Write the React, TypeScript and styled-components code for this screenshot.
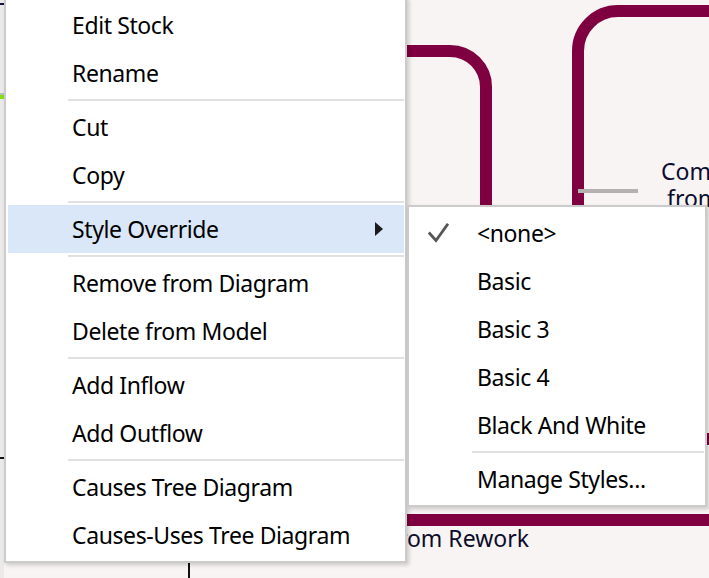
import React from "react"
import styled, { createGlobalStyle } from "styled-components"

type MenuEntry =
  | { kind: "item"; label: string; checked?: boolean; submenu?: boolean; active?: boolean }
  | { kind: "sep" }

const item = (label: string, extra: Partial<{ checked: boolean; submenu: boolean; active: boolean }> = {}): MenuEntry => ({
  kind: "item",
  label,
  ...extra,
})
const sep: MenuEntry = { kind: "sep" }

const mainEntries: MenuEntry[] = [
  item("Edit Stock"),
  item("Rename"),
  sep,
  item("Cut"),
  item("Copy"),
  sep,
  item("Style Override", { submenu: true, active: true }),
  sep,
  item("Remove from Diagram"),
  item("Delete from Model"),
  sep,
  item("Add Inflow"),
  item("Add Outflow"),
  sep,
  item("Causes Tree Diagram"),
  item("Causes-Uses Tree Diagram"),
]

const styleEntries: MenuEntry[] = [
  item("<none>", { checked: true }),
  item("Basic"),
  item("Basic 3"),
  item("Basic 4"),
  item("Black And White"),
  sep,
  item("Manage Styles..."),
]

const GlobalStyle = createGlobalStyle`
  html, body {
    margin: 0;
    padding: 0;
    overflow: hidden;
  }
  body {
    font-family: "Noto Sans", "Open Sans", sans-serif;
  }
`

const Screen = styled.div`
  position: relative;
  display: flex;
  width: 709px;
  height: 578px;
  overflow: hidden;
  background: #f8f4f4;
`

const SideStrip = styled.div`
  flex: none;
  width: 4px;
  background: linear-gradient(
    to bottom,
    #ebe9e9 0,
    #ebe9e9 3px,
    #14143a 3px,
    #14143a 5px,
    #ebe9e9 5px,
    #ebe9e9 93px,
    #bdbdbd 93px,
    #bdbdbd 95px,
    #84e014 95px,
    #84e014 99px,
    #ebe9e9 99px,
    #ebe9e9 457px,
    #111 457px,
    #111 459px,
    #ebe9e9 459px
  );
`

const Canvas = styled.div`
  position: relative;
  flex: 1;
`

const StockShape = styled.div<{ $x: number; $y: number; $w: number; $h: number; $r: number }>`
  position: absolute;
  left: ${(p) => p.$x}px;
  top: ${(p) => p.$y}px;
  width: ${(p) => p.$w}px;
  height: ${(p) => p.$h}px;
  border: 12px solid #7f0040;
  border-radius: ${(p) => p.$r}px;
  box-sizing: border-box;
`

const FlowBar = styled.div<{ $x: number; $y: number; $w: number }>`
  position: absolute;
  left: ${(p) => p.$x}px;
  top: ${(p) => p.$y}px;
  width: ${(p) => p.$w}px;
  height: 12px;
  background: #7f0040;
`

const Connector = styled.div<{ $x: number; $y: number; $w: number; $h: number; $color: string }>`
  position: absolute;
  left: ${(p) => p.$x}px;
  top: ${(p) => p.$y}px;
  width: ${(p) => p.$w}px;
  height: ${(p) => p.$h}px;
  background: ${(p) => p.$color};
`

const StockLabel = styled.div<{ $x: number; $y: number }>`
  position: absolute;
  left: ${(p) => p.$x}px;
  top: ${(p) => p.$y}px;
  font-size: 23px;
  line-height: 27px;
  color: #0c0c2c;
  white-space: nowrap;
`

const LabelLine = styled.span<{ $shift?: number }>`
  display: block;
  padding-left: ${(p) => p.$shift ?? 0}px;
`

const MenuPanel = styled.div<{ $x: number; $y: number; $w: number }>`
  position: absolute;
  left: ${(p) => p.$x}px;
  top: ${(p) => p.$y}px;
  width: ${(p) => p.$w}px;
  box-sizing: border-box;
  display: flex;
  flex-direction: column;
  padding: 2px 0;
  background: #fff;
  border: 2px solid #cbcbcb;
  box-shadow: 2px 2px 4px rgba(0, 0, 0, 0.18);
`

const MenuRow = styled.div<{ $active?: boolean }>`
  display: flex;
  align-items: center;
  height: 48px;
  margin: 0 1px 0 2px;
  background: ${(p) => (p.$active ? "#dae7f9" : "transparent")};
  font-size: 23px;
  letter-spacing: -0.4px;
  color: #000;
  white-space: nowrap;
`

const CheckCol = styled.div<{ $w: number }>`
  flex: none;
  display: flex;
  align-items: center;
  width: ${(p) => p.$w}px;
  padding-left: 17px;
  box-sizing: border-box;
`

const Label = styled.span`
  flex: 1;
`

const ArrowCol = styled.div`
  flex: none;
  display: flex;
  align-items: center;
  padding-right: 21px;
`

const Separator = styled.div<{ $indent: number }>`
  height: 2px;
  margin: 2px 1px 2px ${(p) => p.$indent}px;
  background: #e1e1e1;
`

const CheckIcon = () => (
  <svg width="21" height="20" viewBox="0 0 21 20">
    <polyline points="0.8,9.5 8,17.5 20,0.8" fill="none" stroke="#555" strokeWidth="2.8" />
  </svg>
)

const SubArrow = () => (
  <svg width="8" height="14" viewBox="0 0 8 14">
    <polygon points="0,0 8,7 0,14" fill="#1c1c1c" />
  </svg>
)

interface MenuProps {
  entries: MenuEntry[]
  x: number
  y: number
  width: number
  indent: number
  sepIndent: number
}

const Menu = ({ entries, x, y, width, indent, sepIndent }: MenuProps) => (
  <MenuPanel $x={x} $y={y} $w={width}>
    {entries.map((e, i) =>
      e.kind === "sep" ? (
        <Separator key={i} $indent={sepIndent} />
      ) : (
        <MenuRow key={i} $active={e.active}>
          <CheckCol $w={indent}>{e.checked && <CheckIcon />}</CheckCol>
          <Label>{e.label}</Label>
          {e.submenu && (
            <ArrowCol>
              <SubArrow />
            </ArrowCol>
          )}
        </MenuRow>
      )
    )}
  </MenuPanel>
)

const App = () => {
  return (
    <>
      <GlobalStyle />
      <Screen>
        <SideStrip />
        <Canvas>
          <StockShape $x={296} $y={45} $w={192} $h={420} $r={42} />
          <StockShape $x={568} $y={5} $w={320} $h={440} $r={46} />
          <Connector $x={574} $y={189} $w={60} $h={4} $color="#b5b1b1" />
          <StockLabel $x={657} $y={158}>
            <LabelLine>Completed</LabelLine>
            <LabelLine $shift={6}>from Rework</LabelLine>
          </StockLabel>
          <FlowBar $x={300} $y={514} $w={420} />
          <StockLabel $x={386} $y={525}>from Rework</StockLabel>
          <Connector $x={184} $y={562} $w={2} $h={20} $color="#111" />
        </Canvas>
        <Menu entries={mainEntries} x={4} y={-3} width={403} indent={64} sepIndent={62} />
        <Menu entries={styleEntries} x={407} y={205} width={300} indent={66} sepIndent={63} />
      </Screen>
    </>
  )
}

export default App
